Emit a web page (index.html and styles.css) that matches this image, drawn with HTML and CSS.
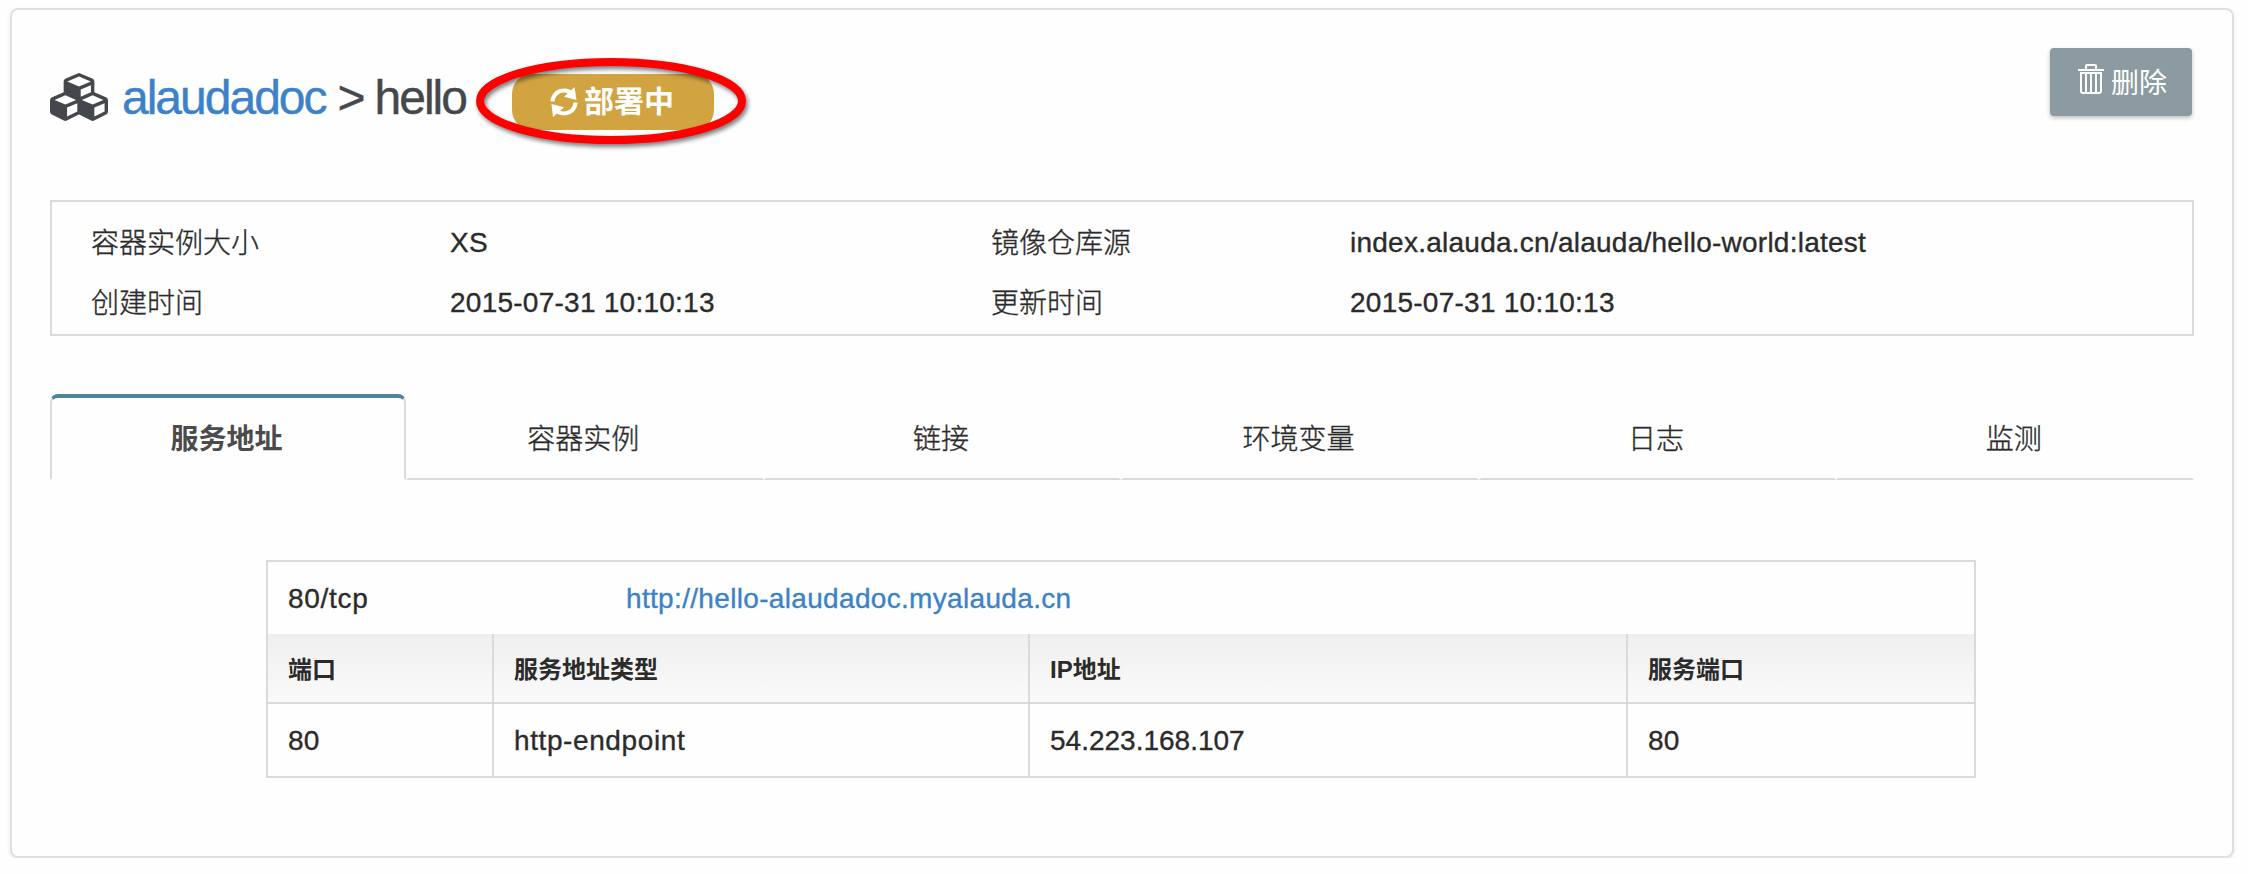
FILE: index.html
```
<!DOCTYPE html>
<html lang="zh-CN">
<head>
<meta charset="utf-8">
<title>alaudadoc &gt; hello</title>
<link rel="stylesheet" href="styles.css">
</head>
<body>
<main class="panel">
  <header class="head">
    <h1 class="title">
      <svg class="cubes" viewBox="0 0 2176 1792" aria-hidden="true"><path fill="currentColor" d="M640 1632l384-192v-314l-384 164v342zm-64-454l404-173-404-173-404 173zm1088 454l384-192v-314l-384 164v342zm-64-454l404-173-404-173-404 173zm-448-293l384-165v-266l-384 164v267zm-64-379l441-189-441-189-441 189zm1088 518v416q0 36-19 67t-52 47l-448 224q-25 14-57 14t-57-14l-448-224q-4-2-7-4-2 2-7 4l-448 224q-25 14-57 14t-57-14l-448-224q-33-16-52-47t-19-67v-416q0-38 21.5-70t56.5-48l434-186v-400q0-38 21.5-70t56.5-48l448-192q23-10 50-10t50 10l448 192q35 16 56.5 48t21.5 70v400l434 186q36 16 57 48t21 70z"/></svg>
      <a class="owner" href="#">alaudadoc</a><span class="sep">&gt;</span><span class="name">hello</span>
    </h1>
    <div class="status">
      <svg class="sync" viewBox="0 0 28 30" aria-hidden="true"><g fill="none" stroke="#fff" stroke-width="4"><path d="M2.400 14.500C3 7.500 8 3.600 14 3.600c4 0 6.500 1.300 8.500 3.600"/><path d="M25.600 15.500C25 22.500 20 26.400 14 26.400c-4 0-6.500-1.300-8.500-3.600"/></g><path fill="#fff" d="M24.500 0l2 13-12.500-3.200zM3 30L1.500 17l12.500 3.200z"/></svg>
      <span class="status-text">部署中</span>
      <svg class="ring" viewBox="0 0 290 106" aria-hidden="true"><ellipse cx="145" cy="53" rx="131" ry="39" fill="none" stroke="#fe0000" stroke-width="8"/></svg>
    </div>
    <button class="delete" type="button">
      <svg class="trash" viewBox="0 0 26 30" aria-hidden="true"><g fill="none" stroke="#fff" stroke-width="2"><path d="M0 6h26M8 5V2q0-1 1-1h8q1 0 1 1v3M3 9v18q0 2 2 2h16q2 0 2-2V9zM8 10v18M13 10v18M18 10v18"/></g></svg>
      <span>删除</span>
    </button>
  </header>

  <dl class="info">
    <dt>容器实例大小</dt><dd>XS</dd>
    <dt>镜像仓库源</dt><dd>index.alauda.cn/alauda/hello-world:latest</dd>
    <dt>创建时间</dt><dd>2015-07-31 10:10:13</dd>
    <dt>更新时间</dt><dd>2015-07-31 10:10:13</dd>
  </dl>

  <nav class="tabs">
    <a class="tab active">服务地址</a>
    <a class="tab">容器实例</a>
    <a class="tab">链接</a>
    <a class="tab">环境变量</a>
    <a class="tab">日志</a>
    <a class="tab">监测</a>
  </nav>

  <section class="ports">
    <div class="port-head"><span>80/tcp</span><a href="#">http://hello-alaudadoc.myalauda.cn</a></div>
    <div class="row labels"><span>端口</span><span>服务地址类型</span><span>IP地址</span><span>服务端口</span></div>
    <div class="row"><span>80</span><span class="kind">http-endpoint</span><span class="ip">54.223.168.107</span><span>80</span></div>
  </section>
</main>
</body>
</html>
```
FILE: styles.css
```
* { box-sizing: border-box; }
body {
  margin: 0;
  padding: 8px 12px 0 10px;
  background: #fefefe;
  color: #2b2b2b;
  font: 28px/40px "Liberation Sans", "Noto Sans CJK SC", sans-serif;
}
a { color: #3c82c8; text-decoration: none; }
.panel {
  width: 2224px;
  height: 850px;
  padding: 38px;
  border: 2px solid #e0e0e0;
  border-radius: 8px;
  box-shadow: 0 2px 4px rgba(0, 0, 0, .08);
}
.head { display: flex; align-items: flex-start; height: 152px; }
.title {
  display: flex;
  align-items: flex-start;
  width: 462px;
  margin: 0;
  padding-top: 22px;
  color: #44484c;
  font-size: 48px;
  font-weight: 400;
  line-height: 56px;
  letter-spacing: -2px;
  -webkit-text-stroke: .4px currentColor;
}
.cubes { width: 58px; height: 48px; margin: 3px 14px 0 0; }
.sep { margin: 0 11px 0 12px; }
.status {
  position: relative;
  display: flex;
  align-items: center;
  width: 202px;
  height: 56px;
  margin-top: 26px;
  padding-left: 38px;
  border-radius: 20px;
  background: #d1a441;
  color: #fff;
}
.sync { width: 28px; height: 30px; margin-right: 6px; }
.status-text { font-size: 30px; font-weight: 700; }
.ring {
  position: absolute;
  left: -46px;
  top: -26px;
  width: 290px;
  height: 106px;
  filter: drop-shadow(2px 3px 2px rgba(0, 0, 0, .5));
}
.delete {
  display: flex;
  align-items: flex-start;
  width: 142px;
  height: 68px;
  margin: 0 2px 0 auto;
  padding: 16px 0 0 28px;
  border: 0;
  border-radius: 4px;
  background: #8c9ba1;
  box-shadow: 0 2px 4px rgba(0, 0, 0, .25);
  color: #fff;
  font: inherit;
}
.trash { width: 26px; height: 30px; margin: 0 7px 0 0; }
.info {
  display: grid;
  grid-template-columns: 360px 540px 360px 1fr;
  grid-auto-rows: 60px;
  height: 136px;
  margin: 0 0 58px;
  padding: 11px 0 0 38px;
  border: 2px solid #d9d9de;
  line-height: 60px;
}
.info dd { margin: 0; letter-spacing: .25px; }
.info dt { padding: 1px 0 0 1px; font-weight: 300; }
.info, .tabs, .port-head, .row { -webkit-text-stroke: .35px currentColor; }
.tabs {
  display: grid;
  grid-template-columns: 356px repeat(5, 1fr);
  grid-template-rows: 86px;
  height: 86px;
  margin-bottom: 80px;
}
.tab {
  padding-right: 3px;
  border: solid transparent;
  border-width: 4px 2px 2px;
  border-bottom-color: #d9dadb;
  color: #2b2b2b;
  font-weight: 300;
  line-height: 83px;
  text-align: center;
}
.tab.active {
  border-color: #51829a #d9dadb transparent;
  border-radius: 8px 8px 0 0;
  color: #4b4b4b;
  font-weight: 700;
  -webkit-text-stroke: 0;
}
.ports {
  width: 1710px;
  height: 218px;
  margin-left: 216px;
  border: 2px solid #d9dadb;
}
.port-head {
  display: flex;
  height: 72px;
  padding-left: 20px;
  line-height: 73px;
  letter-spacing: .33px;
}
.port-head span { width: 338px; letter-spacing: .7px; }
.row { display: grid; grid-template-columns: 226px 536px 598px 1fr; height: 72px; line-height: 73px; }
.row span { padding-left: 20px; border-right: 2px solid #d9dadb; letter-spacing: .25px; }
.row span:last-child { border-right: 0; }
.row .kind { letter-spacing: .6px; }
.row .ip { letter-spacing: 0; }
.labels {
  height: 70px;
  border-bottom: 2px solid #d9dadb;
  background: linear-gradient(#efefef, #fafafa);
  font-size: 24px;
  font-weight: 700;
  line-height: 71px;
  -webkit-text-stroke: 0;
}
.labels span { height: 68px; letter-spacing: 0; }
```
